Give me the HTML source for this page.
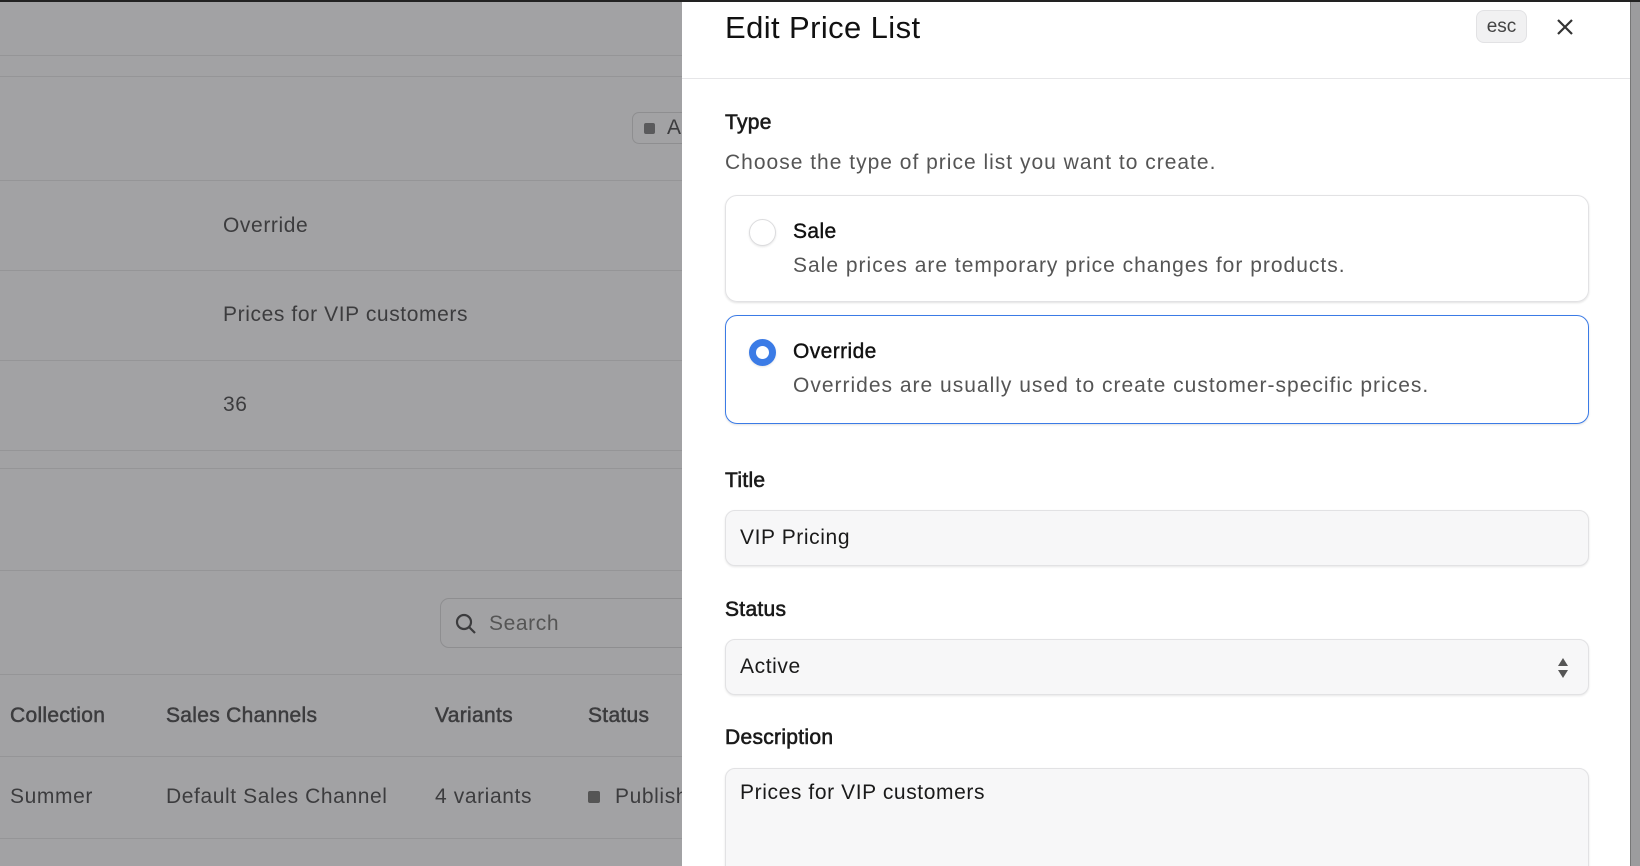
<!DOCTYPE html>
<html><head><meta charset="utf-8"><style>
*{margin:0;padding:0;box-sizing:border-box}
html,body{width:1640px;height:866px;overflow:hidden}
body{position:relative;background:#a2a2a4;font-family:"Liberation Sans",sans-serif;}
.a{position:absolute}
.hl{position:absolute;left:0;width:682px;height:1px;background:#959597}
.bg{color:#3c3c3e;font-size:21px;letter-spacing:0.6px}
.bh{color:#3c3c3e;font-size:21px;-webkit-text-stroke:0.5px #3c3c3e;letter-spacing:0.3px}
.panel{position:absolute;left:682px;top:2px;width:948px;height:864px;background:#fff;overflow:hidden}
.lbl{position:absolute;left:43px;font-size:21px;color:#1a1a1a;-webkit-text-stroke:0.6px #1a1a1a;letter-spacing:0.3px;transform:translateY(-50%)}
.card{position:absolute;left:43px;width:864px;border:1px solid #e2e2e4;border-radius:12px;box-shadow:0 1px 2px rgba(0,0,0,.12)}
.radio{position:absolute;left:23px;width:27px;height:27px;border-radius:50%;border:1px solid #dcdcde;background:#fff;box-shadow:0 1px 2px rgba(0,0,0,.1)}
.ct{position:absolute;left:67px;font-size:21px;color:#111;-webkit-text-stroke:0.4px #111;letter-spacing:0.4px}
.cd{position:absolute;left:67px;font-size:21px;color:#555;letter-spacing:1px}
.inp{position:absolute;left:43px;width:864px;background:#f7f7f8;border:1px solid #e2e2e4;border-radius:10px;box-shadow:0 1px 2px rgba(0,0,0,.1);font-size:21px;color:#1a1a1a;padding-left:14px;letter-spacing:0.6px}
</style></head><body>
<div class="a" style="left:0;top:0;width:1640px;height:2px;background:#222"></div>
<div class="hl" style="top:55px"></div>
<div class="hl" style="top:76px"></div>
<div class="hl" style="top:180px"></div>
<div class="hl" style="top:270px"></div>
<div class="hl" style="top:360px"></div>
<div class="hl" style="top:450px"></div>
<div class="hl" style="top:468px"></div>
<div class="hl" style="top:570px"></div>
<div class="hl" style="top:674px"></div>
<div class="hl" style="top:756px"></div>
<div class="hl" style="top:838px"></div>
<div class="a" style="left:632px;top:112px;width:60px;height:32px;border:1px solid #8e8e90;border-radius:7px"></div>
<div class="a" style="left:644px;top:123px;width:11px;height:11px;background:#5a5a5c;border-radius:2px"></div>
<div class="a bg" style="left:667px;top:116px">A</div>
<div class="a bg" style="left:223px;top:214px">Override</div>
<div class="a bg" style="left:223px;top:303px">Prices for VIP customers</div>
<div class="a bg" style="left:223px;top:393px">36</div>
<div class="a" style="left:440px;top:598px;width:260px;height:50px;border:1px solid #8e8e90;border-radius:9px"></div>
<svg class="a" style="left:454px;top:612px" width="24" height="24" viewBox="0 0 24 24" fill="none" stroke="#3c3c3e" stroke-width="2.2"><circle cx="10" cy="10" r="7"/><path d="M15 15l6 6"/></svg>
<div class="a bg" style="left:489px;top:612px;color:#555">Search</div>
<div class="a bh" style="left:10px;top:704px">Collection</div>
<div class="a bh" style="left:166px;top:704px">Sales Channels</div>
<div class="a bh" style="left:435px;top:704px">Variants</div>
<div class="a bh" style="left:588px;top:704px">Status</div>
<div class="a bg" style="left:10px;top:785px">Summer</div>
<div class="a bg" style="left:166px;top:785px">Default Sales Channel</div>
<div class="a bg" style="left:435px;top:785px">4 variants</div>
<div class="a" style="left:588px;top:791px;width:12px;height:12px;background:#555;border-radius:2px"></div>
<div class="a bg" style="left:615px;top:785px">Publish</div>
<div class="a" style="left:1630px;top:2px;width:10px;height:864px;background:#9c9c9e;border-left:1px solid #777"></div>

<div class="panel">
 <div class="a" style="left:43px;top:8px;font-size:31px;color:#111;letter-spacing:0.4px">Edit Price List</div>
 <div class="a" style="left:794px;top:8px;width:51px;height:33px;background:#f1f1f2;border:1px solid #e2e2e4;border-radius:8px;font-size:19px;color:#444;text-align:center;line-height:31px">esc</div>
 <svg class="a" style="left:873px;top:15px" width="20" height="20" viewBox="0 0 20 20" stroke="#333" stroke-width="2.2"><path d="M3 3l14 14M17 3L3 17"/></svg>
 <div class="a" style="left:0;top:76px;width:948px;height:1px;background:#e6e6e8"></div>
 <div class="lbl" style="top:121px">Type</div>
 <div class="a" style="left:43px;top:149px;font-size:21px;color:#555;letter-spacing:1px">Choose the type of price list you want to create.</div>
 <div class="card" style="top:193px;height:107px">
  <div class="radio" style="top:23px"></div>
  <div class="ct" style="top:24px">Sale</div>
  <div class="cd" style="top:58px">Sale prices are temporary price changes for products.</div>
 </div>
 <div class="card" style="top:313px;height:109px;border:1.5px solid #3b7be6">
  <div class="radio" style="top:23px;border:7px solid #3b7be6;"></div>
  <div class="ct" style="top:24px">Override</div>
  <div class="cd" style="top:58px">Overrides are usually used to create customer-specific prices.</div>
 </div>
 <div class="lbl" style="top:479px">Title</div>
 <div class="inp" style="top:508px;height:56px;line-height:54px">VIP Pricing</div>
 <div class="lbl" style="top:608px">Status</div>
 <div class="inp" style="top:637px;height:56px;line-height:54px">Active
  <svg class="a" style="right:18px;top:16px" width="14" height="24" viewBox="0 0 14 24" fill="#555"><path d="M7 2l5 8H2z M7 22l5-8H2z"/></svg></div>
 <div class="lbl" style="top:736px">Description</div>
 <div class="inp" style="top:766px;height:120px;padding-top:12px">Prices for VIP customers</div>
</div>
</body></html>
